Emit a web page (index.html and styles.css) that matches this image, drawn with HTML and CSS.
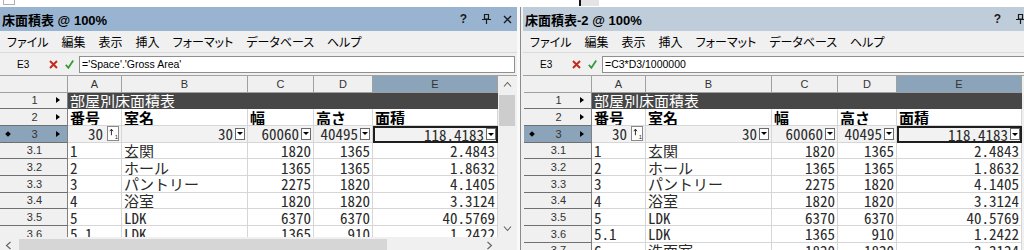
FILE: index.html
```
<!DOCTYPE html>
<html lang="ja">
<head>
    <meta charset="UTF-8">
    <title>床面積表</title>
    <link rel="stylesheet" href="styles.css">
</head>
<body>
    <div class="strip">
        <span class="strip-box"></span>
        <span class="strip-mark"></span>
    </div>
    <div class="panes">
        <!-- left window -->
        <div class="pane">
            <div class="title">
                <span class="name">床面積表 @ 100%</span>
                <span class="tools">
                    <span class="help">?</span>
                    <svg class="pin" width="9" height="10" viewBox="0 0 9 10"><path d="M2.5 0.5h4v4.5h-4z M0 5.5h9 M4.5 5.5v4.5" fill="none" stroke="#1a1a1a" stroke-width="1.2"/></svg>
                    <svg class="close" width="9" height="9" viewBox="0 0 9 9"><path d="M1 1l7 7M8 1l-7 7" stroke="#1a1a1a" stroke-width="1.4"/></svg>
                </span>
            </div>
            <div class="menu">
                <span>ファイル</span><span>編集</span><span>表示</span><span>挿入</span><span>フォーマット</span><span>データベース</span><span>ヘルプ</span>
            </div>
            <div class="fbar">
                <span class="cellname">E3</span>
                <svg class="cancel" width="9" height="9" viewBox="0 0 9 9"><path d="M1 1l7 7M8 1l-7 7" stroke="#c42b1c" stroke-width="2"/></svg>
                <svg class="ok" width="9" height="9" viewBox="0 0 9 9"><path d="M0.8 4.8l2.6 3 4.8-7.2" fill="none" stroke="#3a9a3a" stroke-width="1.8"/></svg>
                <div class="input">='Space'.'Gross Area'</div>
            </div>
            <div class="sheet">
                <div class="grid">
                    <div class="ch"></div><div class="ch">A</div><div class="ch">B</div><div class="ch">C</div><div class="ch">D</div><div class="ch sel">E</div>

                    <div class="rh"><i></i><span>1</span><b class="tri"></b></div>
                    <div class="c banner">部屋別床面積表</div>

                    <div class="rh"><i></i><span>2</span><b class="tri"></b></div>
                    <div class="c hd">番号</div><div class="c hd">室名</div><div class="c hd">幅</div><div class="c hd">高さ</div><div class="c hd">面積</div>

                    <div class="rh sel"><i class="dia"></i><span>3</span><b class="tri"></b></div>
                    <div class="c sum r">30<span class="spin"><svg width="7" height="8" viewBox="0 0 7 8"><path d="M3 8V1M1 3l2-2.5 2 2.5" fill="none" stroke="#000" stroke-width="1"/></svg><small>1</small></span></div>
                    <div class="c sum r">30<span class="dd"></span></div>
                    <div class="c sum r">60060<span class="dd"></span></div>
                    <div class="c sum r">40495<span class="dd"></span></div>
                    <div class="c sum r cur">118.4183<span class="dd"></span></div>

                    <div class="rh"><i></i><span>3.1</span><b></b></div>
                    <div class="c">1</div><div class="c">玄関</div><div class="c r">1820</div><div class="c r">1365</div><div class="c r">2.4843</div>
                    <div class="rh"><i></i><span>3.2</span><b></b></div>
                    <div class="c">2</div><div class="c">ホール</div><div class="c r">1365</div><div class="c r">1365</div><div class="c r">1.8632</div>
                    <div class="rh"><i></i><span>3.3</span><b></b></div>
                    <div class="c">3</div><div class="c">パントリー</div><div class="c r">2275</div><div class="c r">1820</div><div class="c r">4.1405</div>
                    <div class="rh"><i></i><span>3.4</span><b></b></div>
                    <div class="c">4</div><div class="c">浴室</div><div class="c r">1820</div><div class="c r">1820</div><div class="c r">3.3124</div>
                    <div class="rh"><i></i><span>3.5</span><b></b></div>
                    <div class="c">5</div><div class="c">LDK</div><div class="c r">6370</div><div class="c r">6370</div><div class="c r">40.5769</div>
                    <div class="rh"><i></i><span>3.6</span><b></b></div>
                    <div class="c">5.1</div><div class="c">LDK</div><div class="c r">1365</div><div class="c r">910</div><div class="c r">1.2422</div>
                </div>
                <div class="vscroll">
                    <svg class="arrow" width="9" height="17" viewBox="0 0 9 17"><path d="M1 10.5l3.5-4 3.5 4" fill="none" stroke="#606060" stroke-width="1.1"/></svg>
                    <div class="vthumb"></div>
                    <div class="fill"></div>
                    <svg class="arrow" width="9" height="17" viewBox="0 0 9 17"><path d="M1 6.5l3.5 4 3.5-4" fill="none" stroke="#606060" stroke-width="1.1"/></svg>
                </div>
            </div>
            <div class="hscroll">
                <div class="htrack">
                    <svg class="arrow" width="17" height="17" viewBox="0 0 17 17"><path d="M10.5 5l-4 3.5 4 3.5" fill="none" stroke="#606060" stroke-width="1.1"/></svg>
                    <div class="hthumb"></div>
                    <div class="fill"></div>
                    <svg class="arrow" width="17" height="17" viewBox="0 0 17 17"><path d="M6.5 5l4 3.5-4 3.5" fill="none" stroke="#606060" stroke-width="1.1"/></svg>
                </div>
                <div class="corner"></div>
            </div>
        </div>

        <div class="split"></div>

        <!-- right window -->
        <div class="pane pane-r">
            <div class="title">
                <span class="name">床面積表-2 @ 100%</span>
                <span class="tools">
                    <span class="help">?</span>
                    <svg class="pin" width="9" height="10" viewBox="0 0 9 10"><path d="M2.5 0.5h4v4.5h-4z M0 5.5h9 M4.5 5.5v4.5" fill="none" stroke="#1a1a1a" stroke-width="1.2"/></svg>
                    <svg class="close" width="9" height="9" viewBox="0 0 9 9"><path d="M1 1l7 7M8 1l-7 7" stroke="#1a1a1a" stroke-width="1.4"/></svg>
                </span>
            </div>
            <div class="menu">
                <span>ファイル</span><span>編集</span><span>表示</span><span>挿入</span><span>フォーマット</span><span>データベース</span><span>ヘルプ</span>
            </div>
            <div class="fbar">
                <span class="cellname">E3</span>
                <svg class="cancel" width="9" height="9" viewBox="0 0 9 9"><path d="M1 1l7 7M8 1l-7 7" stroke="#c42b1c" stroke-width="2"/></svg>
                <svg class="ok" width="9" height="9" viewBox="0 0 9 9"><path d="M0.8 4.8l2.6 3 4.8-7.2" fill="none" stroke="#3a9a3a" stroke-width="1.8"/></svg>
                <div class="input">=C3*D3/1000000</div>
            </div>
            <div class="sheet">
                <div class="grid">
                    <div class="ch"></div><div class="ch">A</div><div class="ch">B</div><div class="ch">C</div><div class="ch">D</div><div class="ch sel">E</div>

                    <div class="rh"><i></i><span>1</span><b class="tri"></b></div>
                    <div class="c banner">部屋別床面積表</div>

                    <div class="rh"><i></i><span>2</span><b class="tri"></b></div>
                    <div class="c hd">番号</div><div class="c hd">室名</div><div class="c hd">幅</div><div class="c hd">高さ</div><div class="c hd">面積</div>

                    <div class="rh sel"><i class="dia"></i><span>3</span><b class="tri"></b></div>
                    <div class="c sum r">30<span class="spin"><svg width="7" height="8" viewBox="0 0 7 8"><path d="M3 8V1M1 3l2-2.5 2 2.5" fill="none" stroke="#000" stroke-width="1"/></svg><small>1</small></span></div>
                    <div class="c sum r">30<span class="dd"></span></div>
                    <div class="c sum r">60060<span class="dd"></span></div>
                    <div class="c sum r">40495<span class="dd"></span></div>
                    <div class="c sum r cur">118.4183<span class="dd"></span></div>

                    <div class="rh"><i></i><span>3.1</span><b></b></div>
                    <div class="c">1</div><div class="c">玄関</div><div class="c r">1820</div><div class="c r">1365</div><div class="c r">2.4843</div>
                    <div class="rh"><i></i><span>3.2</span><b></b></div>
                    <div class="c">2</div><div class="c">ホール</div><div class="c r">1365</div><div class="c r">1365</div><div class="c r">1.8632</div>
                    <div class="rh"><i></i><span>3.3</span><b></b></div>
                    <div class="c">3</div><div class="c">パントリー</div><div class="c r">2275</div><div class="c r">1820</div><div class="c r">4.1405</div>
                    <div class="rh"><i></i><span>3.4</span><b></b></div>
                    <div class="c">4</div><div class="c">浴室</div><div class="c r">1820</div><div class="c r">1820</div><div class="c r">3.3124</div>
                    <div class="rh"><i></i><span>3.5</span><b></b></div>
                    <div class="c">5</div><div class="c">LDK</div><div class="c r">6370</div><div class="c r">6370</div><div class="c r">40.5769</div>
                    <div class="rh"><i></i><span>3.6</span><b></b></div>
                    <div class="c">5.1</div><div class="c">LDK</div><div class="c r">1365</div><div class="c r">910</div><div class="c r">1.2422</div>
                    <div class="rh"><i></i><span>3.7</span><b></b></div>
                    <div class="c">6</div><div class="c">洗面室</div><div class="c r">1820</div><div class="c r">1820</div><div class="c r">3.3124</div>
                </div>
            </div>
        </div>
    </div>
</body>
</html>
```

FILE: styles.css
```
body {
    margin: 0;
    width: 1024px;
    height: 250px;
    overflow: hidden;
    background-color: #ffffff;
    font-family: "Noto Sans CJK JP", sans-serif;
    color: #000;
}
.strip {
    height: 7px;
    display: flex;
}
.strip-box {
    width: 10px;
    height: 4px;
    margin-left: 3px;
    border: 1px solid #b0b0b0;
    border-top: 0;
}
.strip-mark {
    width: 18px;
    height: 6px;
    margin-left: 564px;
    background-color: #e4e4e4;
    border-left: 2px solid #111;
}
.panes {
    display: flex;
}
.pane {
    width: 517px;
    height: 243px;
    flex: none;
    overflow: hidden;
    background-color: #f0f0f0;
}
.split {
    width: 3px;
    flex: none;
    background-color: #fafafa;
}
.pane-r {
    width: 531px;
    box-sizing: border-box;
    border-left: 1px solid #8c8c8c;
    padding-left: 2px;
}

/* title bar */
.title {
    height: 24px;
    display: flex;
    align-items: center;
    padding: 0 5px 0 2px;
    background-color: #99b4d1;
    font: bold 13px "Liberation Sans", "Noto Sans CJK JP", sans-serif;
}
.pane-r .title {
    background-color: #bfcddb;
}
.title .name {
    flex: 1;
}
.tools {
    display: flex;
    align-items: center;
}
.help {
    font: bold 12px "Liberation Sans", sans-serif;
    color: #1a1a1a;
    margin-right: 15px;
}
.pin {
    margin-right: 12px;
}

/* menu */
.menu {
    height: 22px;
    box-sizing: border-box;
    display: flex;
    align-items: center;
    gap: 13px;
    padding-left: 7px;
    font-size: 12px;
    font-feature-settings: "palt";
    border-bottom: 1px solid #dadada;
}

/* formula bar */
.fbar {
    height: 23px;
    box-sizing: border-box;
    display: flex;
    align-items: center;
    border-bottom: 1px solid #a0a0a0;
}
.cellname {
    width: 49px;
    padding-left: 17px;
    box-sizing: border-box;
    font: 10px "Liberation Sans", sans-serif;
}
.cancel {
    margin-right: 7px;
}
.ok {
    margin-right: 5px;
}
.input {
    width: 436px;
    height: 17px;
    box-sizing: border-box;
    border: 1px solid #8f8f8f;
    background-color: #fff;
    padding-left: 2px;
    font: 10.5px/15px "Liberation Sans", sans-serif;
}

/* sheet */
.sheet {
    display: flex;
    height: 161px;
    overflow: hidden;
}
.pane-r .sheet {
    height: 200px;
    margin-left: 1px;
}
.grid {
    display: grid;
    grid-template-columns: 68px 54px 126px 66px 59px 125px;
    grid-auto-rows: 16.67px;
    flex: none;
}
.ch {
    display: flex;
    align-items: center;
    justify-content: center;
    box-sizing: border-box;
    background-color: #f0f0f0;
    border-right: 1px solid #a0a0a0;
    border-bottom: 1px solid #a0a0a0;
    font: 11px "Liberation Sans", sans-serif;
    color: #333;
}
.ch.sel,
.rh.sel {
    background-color: #8ca4b9;
}
.rh {
    display: grid;
    grid-template-columns: 13px 1fr 11px;
    align-items: center;
    box-sizing: border-box;
    background-color: #f0f0f0;
    border-right: 1px solid #808080;
    border-bottom: 1px solid #707070;
    font: 11px/14px "Liberation Sans", sans-serif;
    color: #333;
    text-align: center;
}
.rh .dia {
    width: 4px;
    height: 4px;
    margin-left: 6px;
    background-color: #000;
    transform: rotate(45deg);
}
.rh .tri {
    width: 0;
    height: 0;
    border-left: 4px solid #000;
    border-top: 3px solid transparent;
    border-bottom: 3px solid transparent;
}
.c {
    display: flex;
    align-items: center;
    box-sizing: border-box;
    padding: 0 2px;
    overflow: hidden;
    white-space: nowrap;
    background-color: #fff;
    border-right: 1px solid #d6d6d6;
    border-bottom: 1px solid #d6d6d6;
    font-family: "Noto Sans Mono CJK JP", "Noto Sans CJK JP", monospace;
    font-size: 15px;
    line-height: 15px;
    color: #2a2a2a;
}
.c.r {
    justify-content: flex-end;
}
.banner {
    grid-column: span 5;
    background-color: #474747;
    border-color: #474747;
    color: #fff;
}
.hd {
    font-weight: bold;
    color: #000;
}
.sum {
    background-color: #f2f2f2;
    gap: 2px;
}
.cur {
    border: 2px solid #1e1e1e;
    padding-right: 0;
}
.dd {
    width: 10px;
    height: 12px;
    box-sizing: border-box;
    border: 1px solid #6a6a6a;
    background-color: #fff;
    display: flex;
    align-items: center;
    justify-content: center;
}
.dd::before {
    content: "";
    border-top: 3px solid #000;
    border-left: 3px solid transparent;
    border-right: 3px solid transparent;
}
.spin {
    width: 12px;
    height: 15px;
    box-sizing: border-box;
    margin-left: 2px;
    border: 1px solid #8a8a8a;
    background-color: #fff;
    display: flex;
    align-items: flex-start;
    padding: 1px 0 0 1px;
}
.spin small {
    font: 6px/6px "Liberation Sans", sans-serif;
    align-self: flex-end;
}

/* scrollbars */
.vscroll {
    width: 18px;
    flex: none;
    display: flex;
    flex-direction: column;
    align-items: center;
    background-color: #f0f0f0;
}
.vthumb {
    width: 16px;
    height: 31px;
    margin-top: 2px;
    background-color: #cdcdcd;
}
.fill {
    flex: 1;
}
.hscroll {
    display: flex;
    height: 17px;
}
.htrack {
    width: 498px;
    display: flex;
    align-items: center;
    background-color: #f0f0f0;
}
.hthumb {
    width: 368px;
    height: 13px;
    margin-left: 2px;
    background-color: #d6d6d6;
}
.corner {
    width: 19px;
    background-color: #f0f0f0;
}
```
